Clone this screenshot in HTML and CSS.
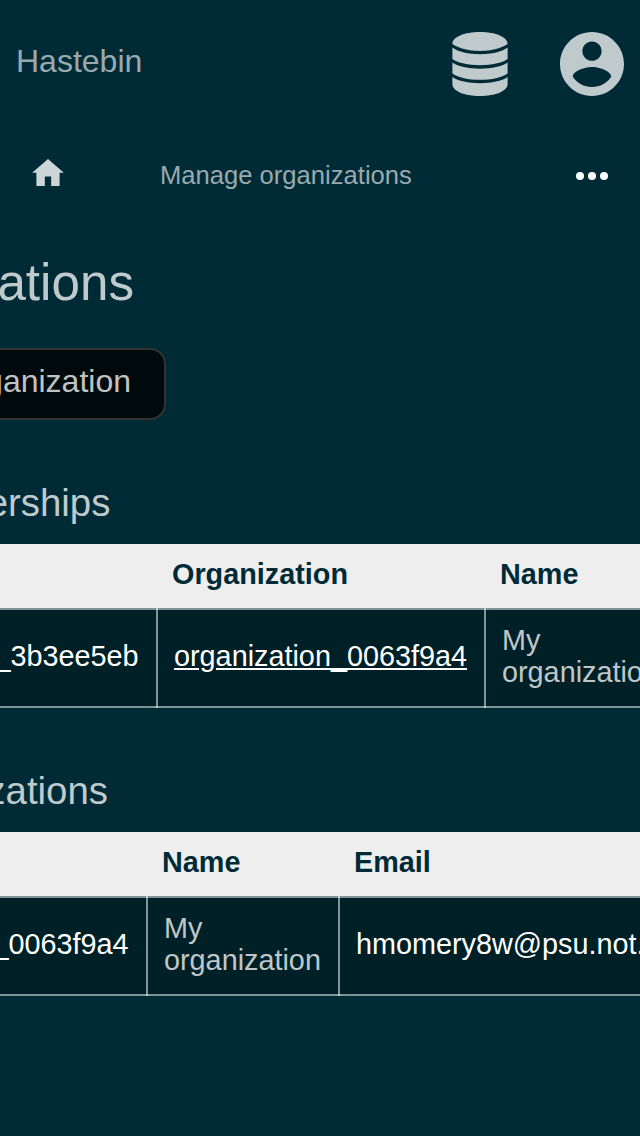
FILE: index.html
```
<!DOCTYPE html>
<html lang="en">
<head>
<meta charset="utf-8">
<title>Manage organizations</title>
<link rel="stylesheet" href="styles.css">
</head>
<body>
<header class="topbar">
  <span class="brand">Hastebin</span>
  <svg class="icon-db" viewBox="-0.4 0 56.8 64" preserveAspectRatio="none"><path d="M0 12C0 5 12 0 28 0s28 5 28 12C50 16 40 19 28 19S6 16 0 12zM0 15.600C6 20 16 22.200 28 22.200S50 20 56 15.600V27C50 31 40 33.200 28 33.200S6 31 0 27zM0 30.500C6 34.500 16 36.700 28 36.700S50 34.500 56 30.500V41.400C50 45.500 40 47.700 28 47.700S6 45.500 0 41.400zM0 45C6 49 16 51.200 28 51.200S50 49 56 45V52c0 7-12 12-28 12S0 59 0 52z"/></svg>
  <svg class="icon-user" viewBox="2 2 20 20"><path d="M12 2C6.480 2 2 6.480 2 12s4.480 10 10 10 10-4.480 10-10S17.520 2 12 2zm0 3c1.660 0 3 1.340 3 3s-1.340 3-3 3-3-1.340-3-3 1.340-3 3-3zm0 14.200c-2.500 0-4.710-1.280-6-3.220.030-1.990 4-3.080 6-3.080 1.990 0 5.970 1.090 6 3.080-1.290 1.940-3.500 3.220-6 3.220z"/></svg>
</header>
<nav class="crumbs">
  <svg class="icon-home" viewBox="2 3 20 17"><path d="M10 20v-6h4v6h5.300v-8.300h2.700L12 3 2 11.700h2.700v8.300z"/></svg>
  <span class="crumb">Manage organizations</span>
  <svg class="icon-more" viewBox="0 0 32 8"><circle cx="4" cy="4" r="4"/><circle cx="16" cy="4" r="4"/><circle cx="28" cy="4" r="4"/></svg>
</nav>
<main>
  <h1 class="title">ations</h1>
  <div class="button">ganization</div>
  <h2 class="heading heading-members">erships</h2>
  <section class="table members">
    <div class="row head"><span></span><span>Organization</span><span>Name</span></div>
    <div class="row data"><span class="cell first">_3b3ee5eb</span><span class="cell"><a class="link">organization_0063f9a4</a></span><span class="cell muted">My<br>organization</span></div>
  </section>
  <h2 class="heading heading-orgs">zations</h2>
  <section class="table orgs">
    <div class="row head"><span></span><span>Name</span><span>Email</span></div>
    <div class="row data"><span class="cell first">_0063f9a4</span><span class="cell muted">My<br>organization</span><span class="cell">hmomery8w@psu.not.</span></div>
  </section>
</main>
</body>
</html>
```
FILE: styles.css
```
* { box-sizing: border-box; }
html { overflow: hidden; }
body {
  margin: 0;
  width: 640px;
  height: 1136px;
  overflow: hidden;
  background: #002b36;
  color: #bfcacd;
  font-family: "Liberation Sans", Arial, sans-serif;
}
svg { display: block; flex: none; fill: #bfcacd; }
.topbar {
  display: flex;
  align-items: center;
  height: 128px;
  padding: 0 16px;
}
.brand {
  flex: 1;
  padding-bottom: 6px;
  font-size: 32px;
  line-height: 36px;
  color: #99aaaf;
}
.icon-db { width: 56px; height: 64px; margin-right: 52px; }
.icon-user { width: 64px; height: 64px; }
.crumbs {
  display: flex;
  align-items: center;
  height: 96px;
  padding: 0 32px;
}
.icon-home { width: 32px; height: 27px; margin: 0 96px 7px 0; fill: #ccd5d7; }
.crumb { flex: 1; padding-bottom: 2px; font-size: 25.6px; line-height: 30px; color: #99aaaf; }
.icon-more { width: 32px; height: 8px; fill: #fff; }
.title, .heading, .button {
  display: flex;
  justify-content: flex-end;
  margin: 0;
  font-weight: 400;
  white-space: nowrap;
}
.title {
  width: 134px;
  height: 124px;
  padding-top: 29px;
  font-size: 51.2px;
  line-height: 60px;
}
.button {
  width: 166px;
  height: 72px;
  padding: 13px 33px 0 0;
  border: 2px solid #333;
  border-left: 0;
  border-radius: 0 16px 16px 0;
  background: #000a0c;
  color: #c2c2c2;
  font-size: 32px;
  line-height: 36px;
}
.heading { font-size: 38.4px; line-height: 44px; }
.heading-members { width: 110.4px; height: 124px; padding-top: 61px; }
.heading-orgs { width: 108px; height: 124px; padding-top: 61px; }
.table { width: 640px; overflow: hidden; font-size: 28.8px; line-height: 32px; }
.row { display: grid; }
.members .row { grid-template-columns: 156px 328px 156px; }
.orgs .row { grid-template-columns: 146px 192px 302px; }
.head {
  height: 64px;
  padding-top: 14px;
  background: #eee;
  color: #002b36;
  font-weight: 700;
}
.head span { padding-left: 16px; }
.data {
  height: 100px;
  border: solid #809298;
  border-width: 2px 0;
  background: #002028;
}
.cell {
  display: flex;
  align-items: center;
  margin: -2px 0;
  padding: 0 0 4px 16px;
  border-left: 2px solid rgba(255, 255, 255, .52);
  white-space: nowrap;
  color: #fff;
}
.cell.first { justify-content: flex-end; padding: 0 17.4px 4px 0; border: 0; }
.cell.muted { display: block; padding-top: 16px; color: #bfc7c9; }
.link { text-decoration: underline; }
```
